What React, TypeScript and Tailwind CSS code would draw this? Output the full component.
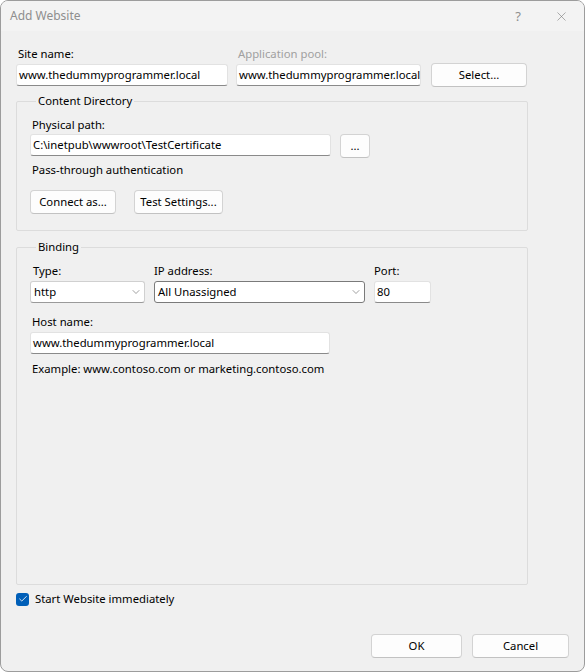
import { Check, ChevronDown, X } from "lucide-react";

const inputCls =
  "h-[22px] bg-white border border-[#e2e2e2] border-b-[#8a8a8a] rounded-[3px] pl-[2px] flex items-center text-black whitespace-nowrap overflow-hidden";
const btnCls =
  "h-[24px] bg-[#fdfdfd] border border-[#d3d3d3] border-b-[#c2c2c2] rounded-[4px] flex items-center justify-center text-black";

function Field({ value, className }: { value: string; className: string }) {
  return <div className={`${inputCls} ${className}`}>{value}</div>;
}

function Dropdown({ value, className, focused }: { value: string; className: string; focused?: boolean }) {
  return (
    <div
      className={`h-[22px] bg-white border rounded-[3px] pl-[3px] pr-[2px] flex items-center justify-between text-black ${className} ${
        focused ? "border-[#7a7a7a]" : "border-[#d0d0d0] border-b-[#9a9a9a]"
      }`}
    >
      <span>{value}</span>
      <ChevronDown size={12} strokeWidth={1.2} className="text-[#606060]" />
    </div>
  );
}

function Group({ title, className, children }: { title: string; className?: string; children: React.ReactNode }) {
  return (
    <fieldset className={`w-[512px] border border-[#dcdcdc] rounded-[2px] pl-[13px] ${className ?? ""}`}>
      <legend className="ml-[6px] px-[2px] leading-[16px] text-black">{title}</legend>
      {children}
    </fieldset>
  );
}

export default function App() {
  return (
    <div className="w-[585px] h-[672px] bg-white font-['Noto_Sans',sans-serif] text-[11.3px] leading-[16px] text-black">
      <div className="w-full h-full flex flex-col border border-[#9c9c9c] rounded-[8px] overflow-hidden bg-[#f0f0f0]">
        {/* title bar */}
        <div className="h-[30px] shrink-0 flex items-center justify-between bg-[#f3f3f3] pl-[9px] pr-[15px] text-[#8e8e8e]">
          <span className="text-[12px]">Add Website</span>
          <div className="flex items-center gap-[33px]">
            <span className="text-[13px]">?</span>
            <X size={15} strokeWidth={0.9} className="text-[#707070]" />
          </div>
        </div>

        <div className="flex-1 flex flex-col pl-[15px] pt-[15px] pb-[13px]">
          {/* site name / app pool */}
          <div className="flex">
            <div className="w-[212px] pl-[2px]">Site name:</div>
            <div className="ml-[8px] w-[185px] pl-[2px] text-[#a0a0a0]">Application pool:</div>
          </div>
          <div className="flex items-start mt-[2px]">
            <Field value="www.thedummyprogrammer.local" className="w-[212px]" />
            <Field value="www.thedummyprogrammer.local" className="ml-[8px] w-[185px] pl-[1px]" />
            <button className={`${btnCls} ml-[10px] w-[96px] -mt-[1px]`}>Select...</button>
          </div>

          <Group title="Content Directory" className="mt-[6px] pb-[16px]">
            <div className="pt-[8px] pl-[2px]">Physical path:</div>
            <div className="flex items-start mt-[1px]">
              <Field value="C:\inetpub\wwwroot\TestCertificate" className="w-[301px]" />
              <button className={`${btnCls} ml-[9px] w-[30px]`}>...</button>
            </div>
            <div className="mt-[4px] pl-[2px]">Pass-through authentication</div>
            <div className="flex mt-[12px]">
              <button className={`${btnCls} w-[86px]`}>Connect as...</button>
              <button className={`${btnCls} ml-[18px] w-[89px]`}>Test Settings...</button>
            </div>
          </Group>

          <Group title="Binding" className="mt-[8px] flex-1">
            <div className="flex pt-[8px]">
              <div className="w-[114px] pl-[3px]">Type:</div>
              <div className="ml-[10px] w-[211px]">IP address:</div>
              <div className="ml-[9px]">Port:</div>
            </div>
            <div className="flex mt-[2px]">
              <Dropdown value="http" className="w-[115px]" />
              <Dropdown value="All Unassigned" className="ml-[9px] w-[211px]" focused />
              <Field value="80" className="ml-[9px] w-[57px]" />
            </div>
            <div className="mt-[11px] pl-[2px]">Host name:</div>
            <Field value="www.thedummyprogrammer.local" className="mt-[2px] w-[300px]" />
            <div className="mt-[7px] pl-[2px]">Example: www.contoso.com or marketing.contoso.com</div>
          </Group>

          <label className="flex items-center mt-[6px]">
            <span className="w-[13px] h-[13px] rounded-[3px] bg-[#005fb8] flex items-center justify-center">
              <Check size={10} strokeWidth={2} className="text-white" />
            </span>
            <span className="ml-[6px]">Start Website immediately</span>
          </label>

          <div className="flex justify-end mt-[27px] pr-[15px]">
            <button className={`${btnCls} w-[91px] border-[#1a6fc4] border-b-[#1a6fc4]`}>OK</button>
            <button className={`${btnCls} ml-[10px] w-[97px]`}>Cancel</button>
          </div>
        </div>
      </div>
    </div>
  );
}
